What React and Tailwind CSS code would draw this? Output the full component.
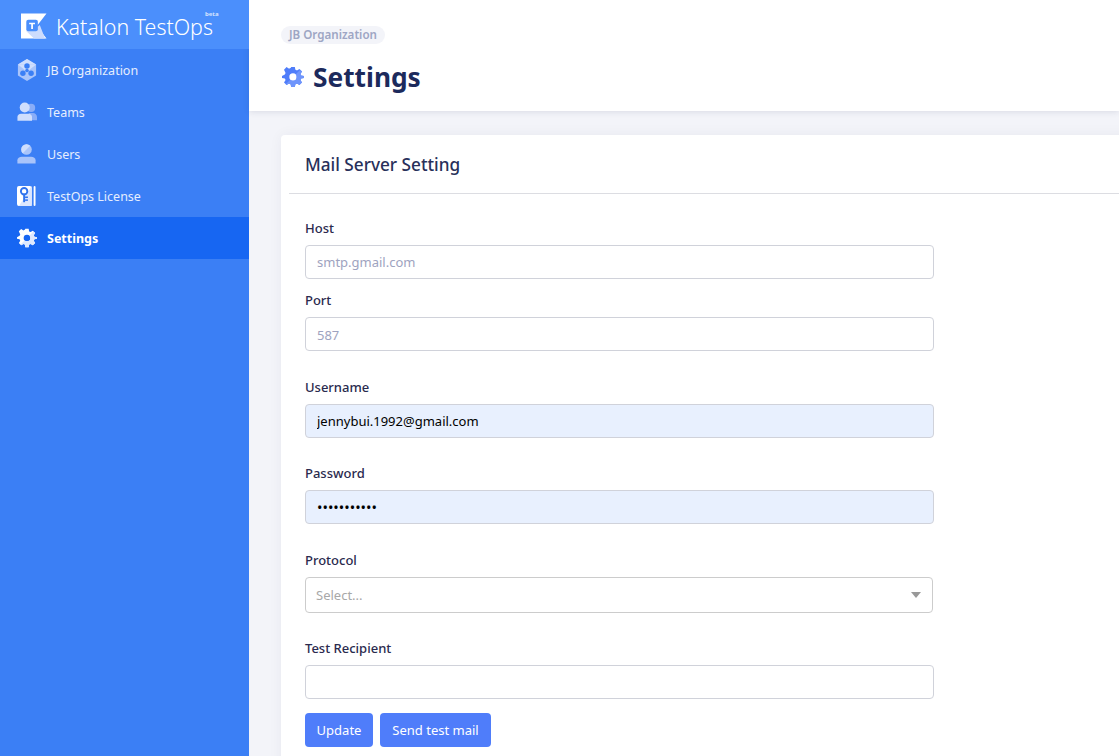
import React from 'react';

const gearPath = 'M10 1h4l.6 3.100c.6.2 1.200.5 1.700.8l2.700-1.700 2.800 2.800-1.700 2.700c.3.5.6 1.100.8 1.700L24 11v2l-3.100.6c-.2.6-.5 1.200-.8 1.700l1.700 2.700-2.800 2.800-2.700-1.700c-.5.3-1.100.6-1.700.8L14 23h-4l-.6-3.100c-.6-.2-1.200-.5-1.700-.8L5 20.800 2.200 18l1.700-2.700c-.3-.5-.6-1.100-.8-1.700L0 13v-2l3.100-1.600c.2-.6.5-1.200.8-1.700L2.200 4 5 1.200l2.700 1.700c.5-.3 1.100-.6 1.700-.8L10 1zm2 7a4 4 0 1 0 0 8 4 4 0 0 0 0-8z';

const GearIcon = ({ className, tint, seam }) => (
    <svg viewBox="0 0 24 24" className={className} fill="currentColor">
        <defs>
            <clipPath id={`half-${seam}`}>
                <path d="M24 0v24H0z" />
            </clipPath>
        </defs>
        <path fillRule="evenodd" d={gearPath} />
        <path fillRule="evenodd" clipPath={`url(#half-${seam})`} fill={tint} d={gearPath} />
    </svg>
);

const OrgIcon = () => (
    <svg viewBox="0 0 22 24" className="w-[20px] h-[22px]">
        <path d="M11 0l10 6v12l-10 6-10-6V6z" fill="#a9c4fa" />
        <path d="M11 0l10 6-20 0z" fill="#cfdefd" />
        <path d="M1 6h20l-10 8z" fill="#cfdefd" />
        <circle cx="11" cy="7.500" r="3" fill="#3b7ff5" />
        <circle cx="6.500" cy="15.500" r="3" fill="#3b7ff5" />
        <circle cx="15.500" cy="15.500" r="3" fill="#3b7ff5" />
        <circle cx="11" cy="12.500" r="2" fill="#3b7ff5" />
    </svg>
);

const TeamsIcon = () => (
    <svg viewBox="0 0 22 22" className="w-[20px] h-[20px]">
        <circle cx="15.500" cy="6.500" r="4.500" fill="#89adf8" />
        <path d="M13 12h4.500c2.500 0 4.500 2 4.500 4.500V20h-9z" fill="#89adf8" />
        <circle cx="8.500" cy="6" r="5.500" fill="#cfdefd" />
        <path d="M4.500 13h8c2.500 0 4 1.500 4 3.500v4H.5v-4c0-2 1.500-3.500 4-3.500z" fill="#cfdefd" />
    </svg>
);

const UsersIcon = () => (
    <svg viewBox="0 0 20 22" className="w-[19px] h-[20px]">
        <circle cx="10" cy="6" r="5.800" fill="#a9c4fa" />
        <path d="M5.900 1.900a5.800 5.800 0 0 1 8.200 0l-8.200 8.200a5.800 5.800 0 0 1 0-8.200z" fill="#cfdefd" />
        <path d="M5 14h10c2.800 0 5 1.500 5 4v3.500H0V18c0-2.500 2.200-4 5-4z" fill="#a9c4fa" />
    </svg>
);

const LicenseIcon = () => (
    <svg viewBox="0 0 20 22" className="w-[19px] h-[21px]">
        <rect x="0" y="0" width="15.500" height="21" rx="2" fill="#ffffff" />
        <path d="M15.500 0v21H2z" fill="#dbe6fe" />
        <rect x="17.500" y="0" width="2" height="21" rx="1" fill="#ffffff" />
        <circle cx="7.500" cy="5.500" r="3.400" fill="none" stroke="#2f73ee" strokeWidth="2" />
        <rect x="6.500" y="8" width="2" height="9" fill="#2f73ee" />
        <rect x="8.500" y="11" width="3" height="1.600" fill="#2f73ee" />
        <rect x="8.500" y="14" width="3" height="1.600" fill="#2f73ee" />
    </svg>
);

const LogoMark = () => (
    <svg viewBox="0 0 27 26" className="w-[26px] h-[26px]">
        <path d="M0 0h26.500l-10 13 10 13H0z" fill="#ffffff" />
        <path d="M5 18h12l-1-3 3.500-3L25 26H13.500z" fill="#cddcfd" />
        <rect x="5.500" y="6.500" width="12" height="12" rx="2" fill="#4a8ffc" />
        <path d="M8.500 9.500h6v1.800h-2.100V16h-1.800v-4.700H8.500z" fill="#ffffff" />
    </svg>
);

const navItems = [
    { label: 'JB Organization', icon: <OrgIcon /> },
    { label: 'Teams', icon: <TeamsIcon /> },
    { label: 'Users', icon: <UsersIcon /> },
    { label: 'TestOps License', icon: <LicenseIcon /> },
    { label: 'Settings', icon: <GearIcon seam="nav" tint="#dde8fe" className="w-[20px] h-[20px] text-white" />, active: true },
];

const Field = ({ label, className, children }) => (
    <div className={className}>
        <label className="block text-[13px] leading-[18px] font-medium text-[#2a2a4e] mb-2">{label}</label>
        {children}
    </div>
);

const inputClass = 'block w-[629px] h-[34px] px-[11px] rounded-[4px] border border-[#d0d2da] text-[13px] outline-none placeholder:text-[#9ea3c0]';

const App = () => {
    return (
        <div className="flex h-screen overflow-hidden bg-[#f3f4f9] font-['Noto_Sans',sans-serif]">
            <aside className="w-[249px] shrink-0 bg-[#3b7ff5] text-white">
                <div className="flex items-center h-[49px] pl-[21px] pt-[2px] bg-[#4b8ffc] relative">
                    <LogoMark />
                    <span className="ml-[9px] mt-[2px] text-[21.4px] leading-[22px] font-light text-white">Katalon TestOps</span>
                    <span className="absolute left-[205px] top-[11px] text-[6px] leading-[6px] font-bold text-[#d5e3fe]">beta</span>
                </div>
                <nav>
                    {navItems.map((item) => (
                        <div
                            key={item.label}
                            className={`flex items-center h-[42px] pl-[16px] ${item.active ? 'bg-[#1766f2]' : ''}`}
                        >
                            <span className="w-[21px] flex justify-center">{item.icon}</span>
                            <span className={`ml-[10px] pt-[2px] text-[12.5px] ${item.active ? 'font-bold text-white' : 'text-[#e6eefe]'}`}>{item.label}</span>
                        </div>
                    ))}
                </nav>
            </aside>

            <main className="flex-1 min-w-0">
                <header className="h-[111px] bg-white shadow-[0_1px_6px_rgba(30,40,80,0.12)] pl-[32px] pt-[26px]">
                    <div className="w-fit h-[18px] px-2 rounded-full bg-[#f3f4f9] text-[11.6px] leading-[18px] font-semibold text-[#9ea6c4]">JB Organization</div>
                    <div className="flex items-center mt-[15px] ml-[1px]">
                        <GearIcon seam="head" tint="#6f95fb" className="w-[22px] h-[22px] text-[#4f7dfa]" />
                        <h1 className="ml-[9px] text-[26.3px] leading-[36px] font-bold text-[#1c2a5c]">Settings</h1>
                    </div>
                </header>

                <section className="ml-[32px] mt-[24px] w-[900px] bg-white rounded-[4px] shadow-[0_0_14px_rgba(30,40,80,0.05)] px-[8px] h-[640px]">
                    <div className="h-[59px] flex items-center pl-[16px] pt-[2px] border-b border-[#dcdde2]">
                        <h2 className="text-[17.2px] font-medium text-[#28305a]">Mail Server Setting</h2>
                    </div>
                    <form className="pl-[16px] pt-[25px]">
                        <Field label="Host">
                            <input className={inputClass} placeholder="smtp.gmail.com" />
                        </Field>
                        <Field label="Port" className="mt-[12px]">
                            <input className={`${inputClass} pt-[2px]`} placeholder="587" />
                        </Field>
                        <Field label="Username" className="mt-[27px]">
                            <input className={`${inputClass} bg-[#e8f0fe] text-black`} defaultValue="jennybui.1992@gmail.com" />
                        </Field>
                        <Field label="Password" className="mt-[26px]">
                            <input type="password" className={`${inputClass} bg-[#e8f0fe] text-black text-[14.5px]`} defaultValue="jennybui199" />
                        </Field>
                        <Field label="Protocol" className="mt-[27px]">
                            <div className="flex items-center justify-between w-[628px] h-[36px] pl-[10px] pr-[11px] rounded-[4px] border border-[#cccccc]">
                                <span className="pt-[1px] text-[13px] text-[#a8a8a8]">Select...</span>
                                <span className="w-0 h-0 border-x-[5px] border-x-transparent border-t-[6px] border-t-[#999999]" />
                            </div>
                        </Field>
                        <Field label="Test Recipient" className="mt-[26px]">
                            <input className={inputClass} />
                        </Field>
                        <div className="flex gap-[7px] mt-[14px]">
                            <button type="button" className="h-[34px] w-[68px] pt-[1px] rounded-[4px] bg-[#4f7dfa] text-white text-[13px]">Update</button>
                            <button type="button" className="h-[34px] w-[111px] pt-[1px] rounded-[4px] bg-[#4f7dfa] text-white text-[13px]">Send test mail</button>
                        </div>
                    </form>
                </section>
            </main>
        </div>
    );
};

export default App;
